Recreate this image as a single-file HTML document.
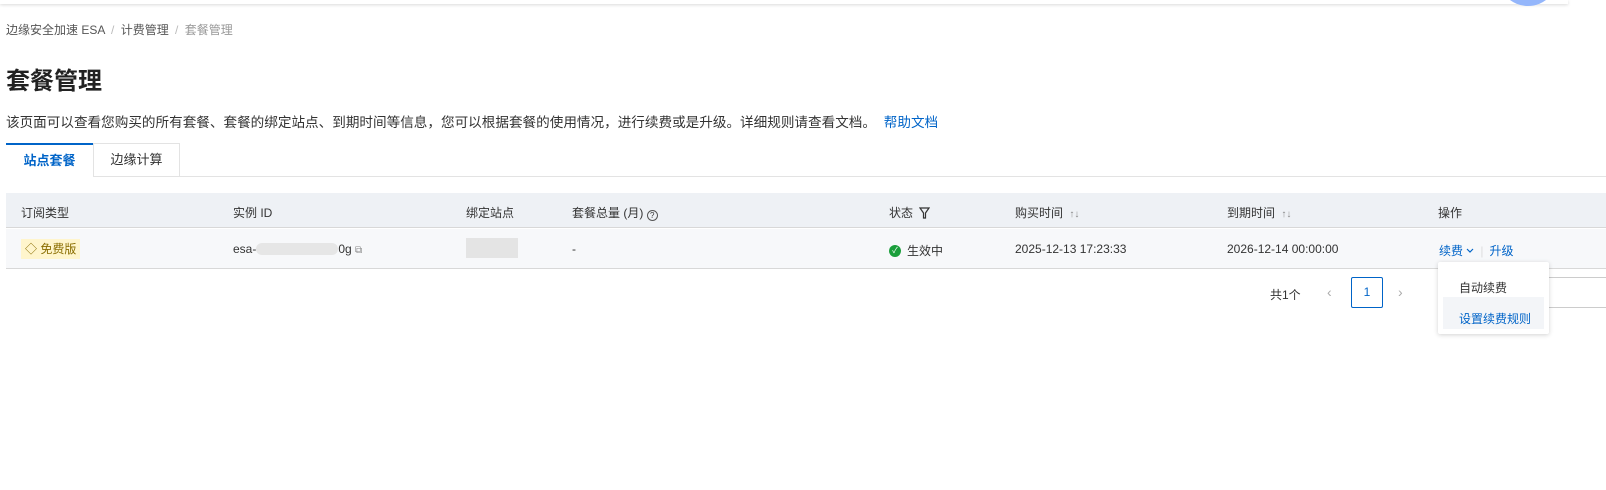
<!DOCTYPE html><html><head><meta charset="utf-8"><style>
*{margin:0;padding:0;box-sizing:border-box}
body{width:1606px;height:490px;overflow:hidden;background:#fff;font-family:"Liberation Sans","Noto Sans CJK SC",sans-serif;color:#333;position:relative;font-size:12px}
.a{position:absolute;white-space:nowrap}
.bar{position:absolute;left:0;top:0;width:1568px;height:4px;background:#fff;box-shadow:0 1px 3px rgba(0,0,0,.15)}
.circ{position:absolute;left:1498px;top:-54px;width:60px;height:60px;border-radius:50%;background:#94b6fb}
.blue{color:#0064c8}
</style></head><body>
<div class="bar"></div><div class="circ"></div>
<div class="a" style="left:6px;top:21px;font-size:12px;color:#555">边缘安全加速 ESA <span style="color:#bbb;margin:0 3px">/</span> 计费管理 <span style="color:#bbb;margin:0 3px">/</span> <span style="color:#999">套餐管理</span></div>
<div class="a" style="left:6px;top:61px;font-size:24px;font-weight:bold;color:#222">套餐管理</div>
<div class="a" style="left:6px;top:111px;font-size:13.6px;color:#333">该页面可以查看您购买的所有套餐、套餐的绑定站点、到期时间等信息，您可以根据套餐的使用情况，进行续费或是升级。详细规则请查看文档。 <span class="blue" style="margin-left:4px">帮助文档</span></div>
<div class="a" style="left:6px;top:176px;width:1600px;height:1px;background:#e3e3e3"></div>
<div class="a" style="left:6px;top:143px;width:87px;height:34px;background:#fff;border-top:2px solid #0064c8;color:#0064c8;font-weight:bold;font-size:13px;text-align:center;line-height:31px">站点套餐</div>
<div class="a" style="left:93px;top:143px;width:87px;height:34px;border:1px solid #e3e3e3;border-bottom:none;font-size:13px;text-align:center;line-height:32px">边缘计算</div>
<div class="a" style="left:6px;top:193px;width:1600px;height:35px;background:#eef1f5;border-bottom:1px solid #d8d8d8"></div>
<div class="a" style="left:6px;top:229px;width:1600px;height:40px;background:#f7f8fa;border-bottom:1px solid #d8d8d8"></div>
<div class="a" style="top:204px;left:21px">订阅类型</div>
<div class="a" style="top:204px;left:233px">实例 ID</div>
<div class="a" style="top:204px;left:466px">绑定站点</div>
<div class="a" style="top:204px;left:572px">套餐总量 (月) <span style="display:inline-block;width:11px;height:11px;border:1px solid #555;border-radius:50%;font-size:8px;text-align:center;line-height:9px;vertical-align:-1px">?</span></div>
<div class="a" style="top:204px;left:889px">状态 <svg width="11" height="12" viewBox="0 0 11 12" style="vertical-align:-2px;margin-left:3px"><path d="M1 1h9L6.5 6v5h-2V6z" fill="none" stroke="#333" stroke-width="1.2"/></svg></div>
<div class="a" style="top:204px;left:1015px">购买时间 <span style="color:#888;font-size:10px;margin-left:3px">↑↓</span></div>
<div class="a" style="top:204px;left:1227px">到期时间 <span style="color:#888;font-size:10px;margin-left:3px">↑↓</span></div>
<div class="a" style="top:204px;left:1438px">操作</div>
<div class="a" style="top:239px;left:21px;height:20px;padding:0 4px;background:#fff5cc;color:#8a6d00;line-height:20px">◇ 免费版</div>
<div class="a" style="top:242px;left:233px">esa-<span style="display:inline-block;width:82px;height:12px;background:#e6e6e6;border-radius:6px;vertical-align:-2px"></span>0g <span style="color:#888;font-size:10px">⧉</span></div>
<div class="a" style="top:238px;left:466px;width:52px;height:20px;background:#e4e4e4"></div>
<div class="a" style="top:242px;left:572px">-</div>
<div class="a" style="top:242px;left:889px;display:flex;align-items:center;gap:6px"><span style="display:inline-block;width:12px;height:12px;border-radius:50%;background:#1a9e3b;color:#fff;font-size:8px;text-align:center;line-height:12px">✓</span>生效中</div>
<div class="a" style="top:242px;left:1015px">2025-12-13 17:23:33</div>
<div class="a" style="top:242px;left:1227px">2026-12-14 00:00:00</div>
<div class="a blue" style="top:242px;left:1439px">续费 <svg width="8" height="6" viewBox="0 0 8 6" style="vertical-align:1px"><path d="M1 1l3 3 3-3" fill="none" stroke="#0064c8" stroke-width="1.2"/></svg><span style="color:#ddd;margin:0 6px">|</span>升级</div>
<div class="a" style="top:286px;left:1270px">共1个</div>
<div class="a" style="top:284px;left:1327px;color:#aaa;font-size:14px">‹</div>
<div class="a" style="top:277px;left:1351px;width:32px;height:31px;border:1px solid #0064c8;border-radius:2px;text-align:center;line-height:29px;color:#0064c8">1</div>
<div class="a" style="top:284px;left:1398px;color:#aaa;font-size:14px">›</div>
<div class="a" style="top:277px;left:1548px;width:60px;height:31px;border:1px solid #ccc"></div>
<div class="a" style="top:262px;left:1438px;width:111px;height:72px;background:#fff;box-shadow:0 1px 5px rgba(0,0,0,.18);border-radius:2px"></div>
<div class="a" style="top:279px;left:1459px">自动续费</div>
<div class="a" style="top:297px;left:1443px;width:101px;height:32px;background:#f3f5f8"></div>
<div class="a blue" style="top:310px;left:1459px">设置续费规则</div>
</body></html>
